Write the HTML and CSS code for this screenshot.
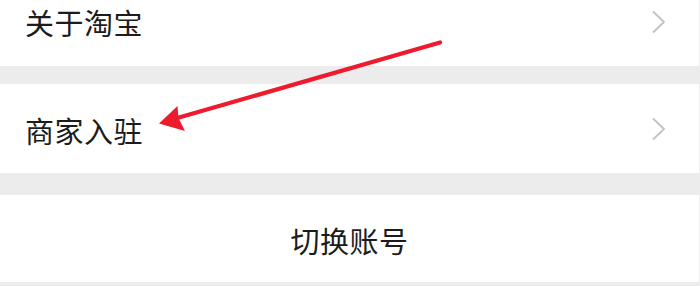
FILE: index.html
```html
<!DOCTYPE html>
<html lang="zh-CN">
<head>
<meta charset="utf-8">
<title>设置</title>
<link rel="stylesheet" href="styles.css">
</head>
<body>
<div class="screen">
  <div class="list">
    <div class="row row-first">
      <span class="label">关于淘宝</span>
      <svg class="chevron" width="14" height="22" viewBox="0 0 14 22"><polyline points="1.5,1 12,11 1.5,21" fill="none" stroke="#c2c2c2" stroke-width="1.8" stroke-linecap="round" stroke-linejoin="round"/></svg>
    </div>
    <div class="gap gap-small"></div>
    <div class="row row-second">
      <span class="label">商家入驻</span>
      <svg class="chevron" width="14" height="22" viewBox="0 0 14 22"><polyline points="1.5,1 12,11 1.5,21" fill="none" stroke="#c2c2c2" stroke-width="1.8" stroke-linecap="round" stroke-linejoin="round"/></svg>
    </div>
    <div class="gap gap-large"></div>
    <div class="row row-center">
      <span class="label">切换账号</span>
    </div>
    <div class="gap gap-bottom"></div>
  </div>
  <svg class="arrow" width="700" height="286" viewBox="0 0 700 286">
    <line x1="440" y1="42.5" x2="172" y2="119.5" stroke="#ee1a2d" stroke-width="4.2" stroke-linecap="round"/>
    <polygon points="159,123.5 177.5,106 178.5,118 185,131" fill="#ee1a2d"/>
  </svg>
</div>
</body>
</html>
```

FILE: styles.css
```css
html, body {
  margin: 0;
  padding: 0;
  background: #ffffff;
}

.screen {
  position: relative;
  width: 700px;
  height: 286px;
  overflow: hidden;
  font-family: "Noto Sans CJK SC", "Noto Sans", sans-serif;
  color: #1c1c1c;
}

.list {
  display: flex;
  flex-direction: column;
  margin-top: -22px;
}

.row {
  display: flex;
  align-items: center;
  justify-content: space-between;
  padding: 0 33px 0 25px;
  background: #ffffff;
  border-right: 1px solid #efefef;
}

.row-first {
  height: 88px;
}

.row-second {
  height: 89px;
}

.row-center {
  height: 87px;
  justify-content: center;
  padding: 0;
}

.label {
  font-size: 29px;
  line-height: 1;
  font-weight: 400;
  letter-spacing: 0.5px;
}

.row-second .label {
  margin-top: 4px;
}

.row-center .label {
  margin-top: 3px;
}

.chevron {
  display: block;
}

.gap {
  background: #ececec;
}

.gap-small {
  height: 18px;
}

.gap-large {
  height: 22px;
}

.gap-bottom {
  height: 6px;
}

.arrow {
  position: absolute;
  top: 0;
  left: 0;
  pointer-events: none;
}
```
